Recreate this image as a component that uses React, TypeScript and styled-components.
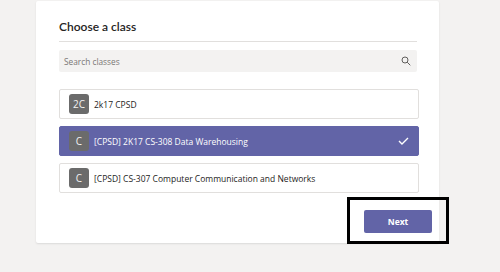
import styled, { createGlobalStyle } from "styled-components";

const GlobalStyle = createGlobalStyle`
  html, body {
    margin: 0;
    padding: 0;
    background: #f3f2f1;
    font-family: "Open Sans", "Noto Sans", sans-serif;
  }
`;

const Page = styled.div`
  position: relative;
  width: 500px;
  height: 272px;
  padding: 1px 0 0 36px;
  box-sizing: border-box;
`;

const Card = styled.div`
  width: 403px;
  height: 242px;
  background: #fff;
  border-radius: 2px;
  box-shadow: 0 1px 2px rgba(0, 0, 0, 0.1);
  padding: 17px 22px 0 23px;
  box-sizing: border-box;
  display: flex;
  flex-direction: column;
`;

const Title = styled.h2`
  margin: 0;
  font-family: Lato, "Open Sans", sans-serif;
  font-size: 12px;
  line-height: 18px;
  font-weight: 600;
  color: #252423;
  padding-bottom: 5px;
  border-bottom: 1px solid #e1dfdd;
`;

const Search = styled.div`
  margin-top: 8px;
  height: 22px;
  background: #f3f2f1;
  border-radius: 2px;
  display: flex;
  align-items: center;
  justify-content: space-between;
  padding: 0 6px 0 5px;
  font-size: 8.3px;
  color: #7a7775;
`;

const List = styled.div`
  margin-top: 17px;
  margin-right: -2px;
  display: flex;
  flex-direction: column;
  gap: 7px;
`;

const Item = styled.div<{ $selected?: boolean }>`
  height: 30px;
  box-sizing: border-box;
  border: 1px solid ${(p) => (p.$selected ? "#6264a7" : "#e1dfdd")};
  background: ${(p) => (p.$selected ? "#6264a7" : "#fff")};
  color: ${(p) => (p.$selected ? "#fff" : "#252423")};
  border-radius: 2px;
  display: flex;
  align-items: center;
  padding: 0 9px;
  gap: 5px;
  font-size: 8.5px;
`;

const Avatar = styled.div`
  width: 20px;
  height: 20px;
  border-radius: 3px;
  background: #6b6b6b;
  color: #f3f2f1;
  font-size: 10px;
  display: flex;
  align-items: center;
  justify-content: center;
  flex-shrink: 0;
`;

const Label = styled.span`
  flex: 1;
`;

const Footer = styled.div`
  margin-top: 17px;
  margin-right: -15px;
  display: flex;
  justify-content: flex-end;
`;

const NextButton = styled.button`
  width: 68px;
  height: 23px;
  border: none;
  border-radius: 2px;
  background: #6264a7;
  color: #fff;
  font-family: "Open Sans", "Noto Sans", sans-serif;
  font-size: 8.5px;
  font-weight: 700;
  padding: 0;
`;

const Highlight = styled.div`
  position: absolute;
  left: 347px;
  top: 197px;
  width: 102px;
  height: 47px;
  box-sizing: border-box;
  border: 3px solid #000;
`;

const classes = [
  { initials: "2C", name: "2k17 CPSD" },
  { initials: "C", name: "[CPSD] 2K17 CS-308 Data Warehousing", selected: true },
  { initials: "C", name: "[CPSD] CS-307 Computer Communication and Networks" },
];

export default function App() {
  return (
    <>
      <GlobalStyle />
      <Page>
        <Card>
          <Title>Choose a class</Title>
          <Search>
            <span>Search classes</span>
            <svg width="10" height="10" viewBox="0 0 10 10" fill="none" stroke="#605e5c" strokeWidth="1">
              <circle cx="4" cy="4" r="3" />
              <line x1="6.2" y1="6.2" x2="9.3" y2="9.3" />
            </svg>
          </Search>
          <List>
            {classes.map((c, i) => (
              <Item key={i} $selected={c.selected}>
                <Avatar>{c.initials}</Avatar>
                <Label>{c.name}</Label>
                {c.selected && (
                  <svg width="11" height="8" viewBox="0 0 11 8" fill="none" stroke="#fff" strokeWidth="1.4">
                    <polyline points="1,4 4,7 10,1" />
                  </svg>
                )}
              </Item>
            ))}
          </List>
          <Footer>
            <NextButton>Next</NextButton>
          </Footer>
        </Card>
        <Highlight />
      </Page>
    </>
  );
}
